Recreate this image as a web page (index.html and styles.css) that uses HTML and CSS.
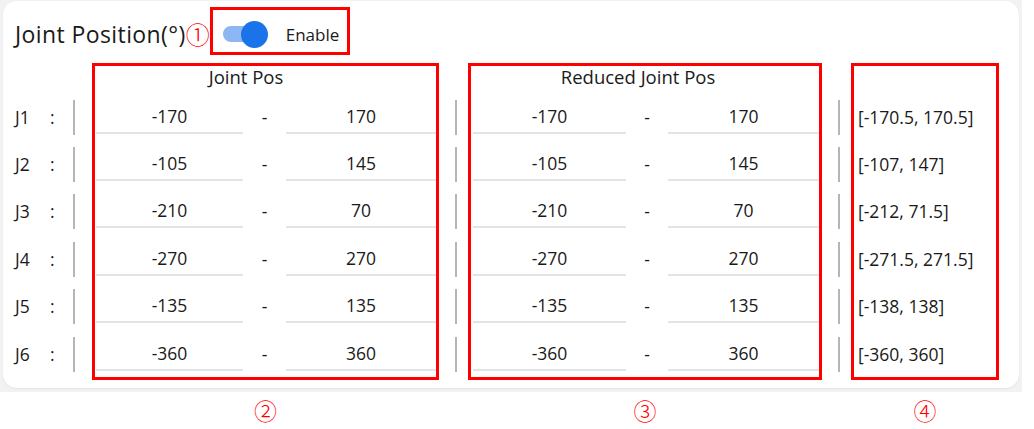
FILE: index.html
```html
<!DOCTYPE html>
<html lang="en">
<head>
<meta charset="utf-8">
<title>Joint Position</title>
<link rel="stylesheet" href="styles.css">
</head>
<body>
<div class="panel">
  <section class="card">
    <header class="title-row">
      <h1 class="title">Joint Position(°)</h1>
      <span class="mark mark-title">①</span>
      <div class="switch-box">
        <span class="switch"><span class="track"></span><span class="knob"></span></span>
        <span class="switch-label">Enable</span>
      </div>
    </header>

    <div class="limits">
      <div class="col col-labels">
        <div class="head"></div>
        <div class="row"><span class="jname">J1</span><span class="colon">:</span></div>
        <div class="row"><span class="jname">J2</span><span class="colon">:</span></div>
        <div class="row"><span class="jname">J3</span><span class="colon">:</span></div>
        <div class="row"><span class="jname">J4</span><span class="colon">:</span></div>
        <div class="row"><span class="jname">J5</span><span class="colon">:</span></div>
        <div class="row"><span class="jname">J6</span><span class="colon">:</span></div>
      </div>

      <div class="col col-bar col-bar-first">
        <div class="head"></div>
        <div class="row"><i class="bar"></i></div>
        <div class="row"><i class="bar"></i></div>
        <div class="row"><i class="bar"></i></div>
        <div class="row"><i class="bar"></i></div>
        <div class="row"><i class="bar"></i></div>
        <div class="row"><i class="bar"></i></div>
      </div>

      <div class="col box col-pos">
        <div class="head">Joint Pos</div>
        <div class="row"><span class="field f1">-170</span><span class="dash">-</span><span class="field f2">170</span></div>
        <div class="row"><span class="field f1">-105</span><span class="dash">-</span><span class="field f2">145</span></div>
        <div class="row"><span class="field f1">-210</span><span class="dash">-</span><span class="field f2">70</span></div>
        <div class="row"><span class="field f1">-270</span><span class="dash">-</span><span class="field f2">270</span></div>
        <div class="row"><span class="field f1">-135</span><span class="dash">-</span><span class="field f2">135</span></div>
        <div class="row"><span class="field f1">-360</span><span class="dash">-</span><span class="field f2">360</span></div>
      </div>

      <div class="col col-bar">
        <div class="head"></div>
        <div class="row"><i class="bar"></i></div>
        <div class="row"><i class="bar"></i></div>
        <div class="row"><i class="bar"></i></div>
        <div class="row"><i class="bar"></i></div>
        <div class="row"><i class="bar"></i></div>
        <div class="row"><i class="bar"></i></div>
      </div>

      <div class="col box col-reduced">
        <div class="head">Reduced Joint Pos</div>
        <div class="row"><span class="field f1">-170</span><span class="dash">-</span><span class="field f2">170</span></div>
        <div class="row"><span class="field f1">-105</span><span class="dash">-</span><span class="field f2">145</span></div>
        <div class="row"><span class="field f1">-210</span><span class="dash">-</span><span class="field f2">70</span></div>
        <div class="row"><span class="field f1">-270</span><span class="dash">-</span><span class="field f2">270</span></div>
        <div class="row"><span class="field f1">-135</span><span class="dash">-</span><span class="field f2">135</span></div>
        <div class="row"><span class="field f1">-360</span><span class="dash">-</span><span class="field f2">360</span></div>
      </div>

      <div class="col col-bar">
        <div class="head"></div>
        <div class="row"><i class="bar"></i></div>
        <div class="row"><i class="bar"></i></div>
        <div class="row"><i class="bar"></i></div>
        <div class="row"><i class="bar"></i></div>
        <div class="row"><i class="bar"></i></div>
        <div class="row"><i class="bar"></i></div>
      </div>

      <div class="col box col-range">
        <div class="head"></div>
        <div class="row">[-170.5, 170.5]</div>
        <div class="row">[-107, 147]</div>
        <div class="row">[-212, 71.5]</div>
        <div class="row">[-271.5, 271.5]</div>
        <div class="row">[-138, 138]</div>
        <div class="row">[-360, 360]</div>
      </div>
    </div>
  </section>
</div>

<div class="marks">
  <span></span><span></span>
  <span class="mark">②</span>
  <span></span>
  <span class="mark">③</span>
  <span></span>
  <span class="mark">④</span>
</div>
</body>
</html>
```

FILE: styles.css
```css
* { box-sizing: border-box; }

body {
  margin: 0;
  background: #ffffff;
  font-family: "Open Sans", "Noto Sans", "Noto Sans CJK SC", sans-serif;
  color: #1a1a1a;
}

.panel {
  width: 1022px;
  background: #f2f2f2;
  padding: 1px 3px 4px 3px;
}

.card {
  background: #ffffff;
  border-radius: 14px;
  padding: 6px 0 8px 12px;
  box-shadow: 0 1px 2px rgba(0, 0, 0, 0.06);
}

/* heading with the enable switch */
.title-row {
  display: flex;
  align-items: center;
  height: 48px;
}

.title {
  margin: 0;
  font-size: 23px;
  font-weight: 400;
  line-height: 30px;
  padding-top: 6px;
  letter-spacing: 0.4px;
}

.mark {
  color: #ff0000;
  font-family: "Noto Sans CJK SC", "DejaVu Sans", sans-serif;
  font-weight: 300;
  text-align: center;
}

.mark-title {
  font-size: 24px;
  line-height: 30px;
  padding-top: 6px;
  margin-left: 0;
}

.switch-box {
  display: flex;
  align-items: center;
  height: 48px;
  margin-left: 0;
  padding: 6px 8px 0 10px;
  border: 3px solid #ff0000;
}

.switch {
  position: relative;
  width: 46px;
  height: 26px;
  display: inline-block;
}

.track {
  position: absolute;
  left: 0;
  top: 5px;
  width: 34px;
  height: 16px;
  border-radius: 8px;
  background: #8db6f2;
}

.knob {
  position: absolute;
  left: 18px;
  top: 0;
  width: 27px;
  height: 27px;
  border-radius: 50%;
  background: #1a73e8;
}

.switch-label {
  font-size: 17px;
  margin-left: 17px;
}

/* limits table */
.limits,
.marks {
  display: grid;
  grid-template-columns: 55px 22px 347px 29px 354px 29px 148px;
}

.limits {
  margin-top: 8px;
  font-size: 17.5px;
}

.col {
  display: flex;
  flex-direction: column;
}

.box {
  border: 3px solid #ff0000;
}

.head {
  height: 30px;
  flex: none;
  text-align: center;
  font-size: 18.5px;
  line-height: 22px;
}

.box .head {
  height: 27px;
}

.col-pos .head { padding-right: 39px; }
.col-reduced .head { padding-right: 14px; }

.row {
  height: 47.4px;
  flex: none;
  display: flex;
  align-items: center;
}

.jname {
  width: 35px;
}

.col-bar .row {
  padding-left: 16px;
}

.col-bar-first .row {
  padding-left: 3px;
}

.bar {
  display: block;
  width: 2px;
  height: 35px;
  background: #b5b5b5;
  margin-top: 1px;
}

.field {
  height: 34px;
  border-bottom: 2px solid #e4e4e4;
  display: flex;
  align-items: center;
  justify-content: center;
}

.dash {
  text-align: center;
}

.col-pos .f1 { margin-left: 1px; width: 147px; }
.col-pos .dash { width: 43px; }
.col-pos .f2 { width: 150px; }

.col-reduced .f1 { margin-left: 2px; width: 153px; }
.col-reduced .dash { width: 42px; }
.col-reduced .f2 { width: 151px; }

.col-range .row {
  padding-left: 4px;
}

/* circled callouts under the panel */
.marks {
  padding-left: 15px;
  height: 36px;
  align-items: center;
}

.marks .mark {
  font-size: 23px;
  line-height: 36px;
}
```
